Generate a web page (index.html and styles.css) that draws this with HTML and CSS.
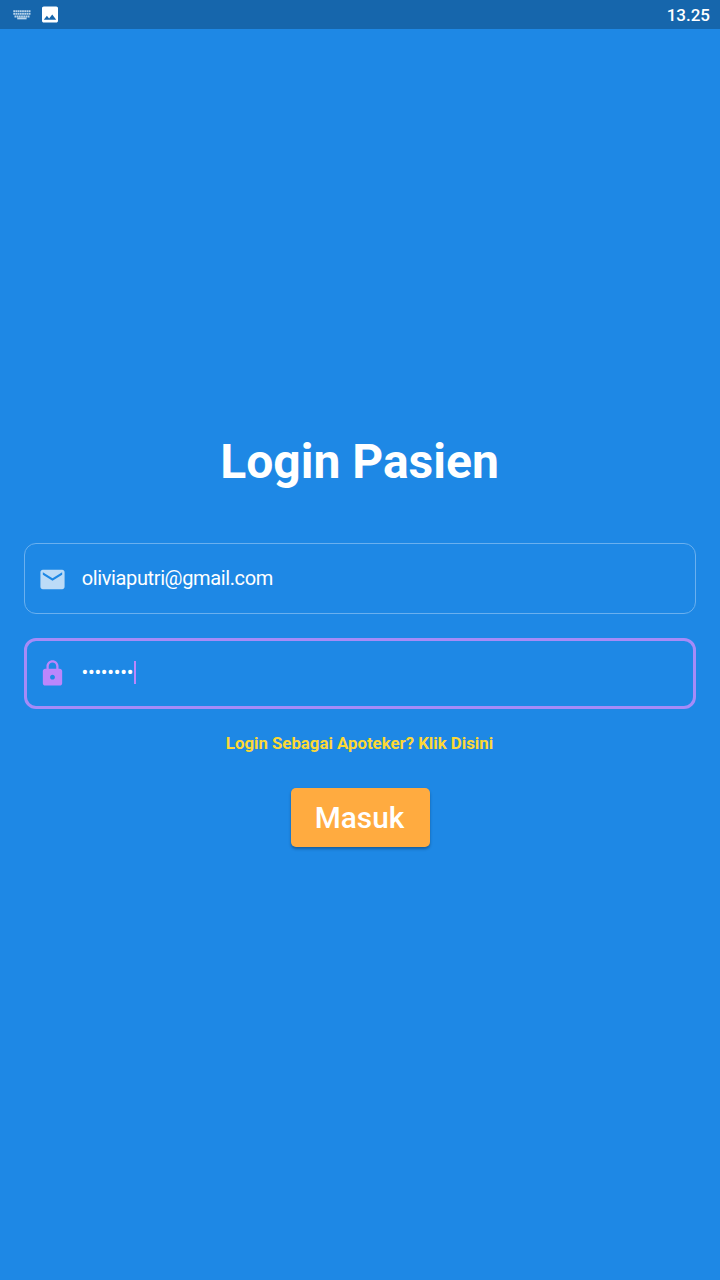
FILE: index.html
```html
<!DOCTYPE html>
<html lang="id">
<head>
<meta charset="utf-8">
<title>Login Pasien</title>
<link rel="stylesheet" href="styles.css">
</head>
<body>
<header class="status">
  <svg class="keyboard" viewBox="0 0 18 10">
    <g stroke="#b7d3ea" stroke-width="1.9" fill="none">
      <path d="M0.3 1.200H17.700M0.300 3.900H17.700M1.500 6.500H16.500" stroke-dasharray="1.800 .4"/>
      <path d="M4.200 8.400H13.600" stroke-width="1.900"/>
    </g>
  </svg>
  <svg class="picture" viewBox="3 3 18 18"><path fill="#fff" d="M21 19V5c0-1.100-.9-2-2-2H5c-1.100 0-2 .9-2 2v14c0 1.100.9 2 2 2h14c1.100 0 2-.9 2-2zM8.500 13.500l2.500 3.010L14.500 12l4.500 6H5l3.500-4.500z"/></svg>
  <time class="clock">13.25</time>
</header>
<main class="login">
  <h1 class="title">Login Pasien</h1>
  <div class="field">
    <svg class="icon icon-mail" viewBox="0 0 24 24"><path d="M20 4H4c-1.100 0-1.990.9-1.990 2L2 18c0 1.100.9 2 2 2h16c1.100 0 2-.9 2-2V6c0-1.100-.9-2-2-2zm0 4l-8 5-8-5V6l8 5 8-5v2z"/></svg>
    <span class="value email">oliviaputri@gmail.com</span>
  </div>
  <div class="field field-active">
    <svg class="icon icon-lock" viewBox="0 0 24 24"><path d="M18 8h-1V6c0-2.760-2.240-5-5-5S7 3.240 7 6v2H6c-1.100 0-2 .9-2 2v10c0 1.100.9 2 2 2h12c1.100 0 2-.9 2-2V10c0-1.100-.9-2-2-2zm-6 9c-1.100 0-2-.9-2-2s.9-2 2-2 2 .9 2 2-.9 2-2 2zm3.100-9H8.900V6c0-1.710 1.390-3.100 3.100-3.100 1.710 0 3.100 1.390 3.100 3.100v2z"/></svg>
    <span class="value secret">••••••••</span><span class="caret"></span>
  </div>
  <a class="switch">Login Sebagai Apoteker? Klik Disini</a>
  <button class="submit">Masuk</button>
</main>
</body>
</html>
```
FILE: styles.css
```css
* { box-sizing: border-box; }
body {
  margin: 0;
  height: 1280px;
  overflow: hidden;
  background: #1e88e5;
  color: #fff;
  font-family: Roboto, sans-serif;
}
.status {
  display: flex;
  align-items: center;
  height: 29px;
  padding: 0 10px 0 13px;
  background: #1666ac;
}
.keyboard { width: 18px; height: 10px; }
.picture { width: 16px; height: 17px; margin-left: 11px; }
.clock {
  margin-left: auto;
  padding-top: 1px;
  font-size: 17px;
  line-height: 20px;
  font-weight: 500;
}
.login {
  display: flex;
  flex-direction: column;
  align-items: center;
  padding: 405px 24px 0;
}
.title {
  margin: 0 0 53px;
  padding-right: 1px;
  font-size: 48px;
  line-height: 56px;
  font-weight: 700;
}
.field {
  display: flex;
  align-items: center;
  width: 100%;
  height: 71px;
  margin-bottom: 24px;
  padding: 0 13px;
  border: 1px solid #6ab0ef;
  border-radius: 12px;
}
.field-active {
  padding: 0 11px;
  border: 3px solid #a68bf8;
}
.icon { width: 29px; height: 29px; flex: none; }
.icon-mail { margin: 1px 0 0 .3px; fill: #bcdbf7; }
.icon-lock { fill: #bb86fc; }
.value {
  margin-left: 14.500px;
  font-size: 20px;
  line-height: 23px;
}
.email { padding-bottom: 1px; letter-spacing: -0.38px; }
.secret { padding-bottom: 2px; letter-spacing: -0.300px; }
.caret { width: 2px; height: 23px; margin: 0 0 3px 1px; background: #bb86fc; }
.switch {
  padding-right: 1px;
  font-size: 16.800px;
  line-height: 20px;
  font-weight: 700;
  color: #fdd835;
}
.submit {
  width: 139px;
  height: 59px;
  margin: 35px 0 0;
  padding: 0 1px 0 0;
  border: 0;
  border-radius: 5px;
  background: #ffab40;
  box-shadow: 0 2px 3px rgba(0, 0, 0, .3);
  color: #fff;
  font: 500 29.800px/59px Roboto, sans-serif;
}
```
